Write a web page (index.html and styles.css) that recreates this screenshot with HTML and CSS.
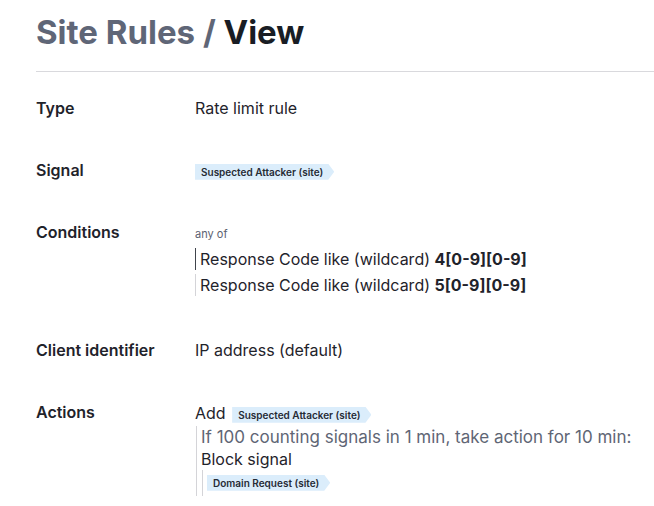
FILE: index.html
```html
<!DOCTYPE html>
<html lang="en">
<head>
    <meta charset="UTF-8">
    <meta name="viewport" content="width=device-width, initial-scale=1.0">
    <title>Site Rules / View</title>
    <link rel="stylesheet" href="styles.css">
</head>
<body>

    <div class="page">
        <h1 class="page-title"><span class="crumb">Site Rules /</span> View</h1>

        <dl class="details">
            <dt>Type</dt>
            <dd>Rate limit rule</dd>

            <dt>Signal</dt>
            <dd><span class="tag">Suspected Attacker (site)</span></dd>

            <dt>Conditions</dt>
            <dd>
                <div class="group-op">any of</div>
                <div class="cond cond-first">Response Code like (wildcard) <b>4[0-9][0-9]</b></div>
                <div class="cond cond-last">Response Code like (wildcard) <b>5[0-9][0-9]</b></div>
            </dd>

            <dt>Client identifier</dt>
            <dd>IP address (default)</dd>

            <dt>Actions</dt>
            <dd>
                <div class="action-line">Add <span class="tag">Suspected Attacker (site)</span></div>
                <div class="nested nested-outer">
                    <div class="muted">If 100 counting signals in 1 min, take action for 10 min:</div>
                    <div>Block signal</div>
                    <div class="nested nested-inner">
                        <span class="tag">Domain Request (site)</span>
                    </div>
                </div>
            </dd>
        </dl>
    </div>

</body>
</html>
```

FILE: styles.css
```css
body {
    margin: 0;
    font-family: Inter, "Noto Sans", sans-serif;
    color: #1f232b;
    background: #fff;
}

.page {
    padding: 0 0 0 36px;
}

.page-title {
    margin: 0;
    padding: 12px 0 19px;
    font-size: 33px;
    font-weight: 700;
    line-height: 40px;
    color: #191d24;
    border-bottom: 1px solid #d9d9dd;
}

.crumb {
    color: #5f6677;
}

.details {
    display: grid;
    grid-template-columns: 159px 1fr;
    row-gap: 40px;
    margin: 25px 0 0;
    font-size: 16px;
    line-height: 22px;
}

.details dt {
    font-weight: 600;
}

.details dd {
    margin: 0;
}

/* little arrow shaped label */
.tag {
    display: inline-block;
    height: 16px;
    padding: 0 11px 0 6px;
    font-size: 10px;
    font-weight: 600;
    line-height: 16px;
    color: #262b35;
    background: #dbedfb;
    vertical-align: middle;
    clip-path: polygon(0 0, calc(100% - 6px) 0, 100% 50%, calc(100% - 6px) 100%, 0 100%);
}

.group-op {
    font-size: 11px;
    line-height: 16px;
    padding-top: 5px;
    color: #5b6170;
}

.cond {
    margin-top: 4px;
    padding-left: 4px;
    border-left: 1px solid #d4d4d8;
    line-height: 22px;
}

.cond-first {
    margin-top: 6px;
    border-left-color: #40444c;
}

.cond-last {
    margin-bottom: 3px;
}

.cond b {
    font-weight: 700;
}

.action-line {
    padding-top: 1px;
    line-height: 22px;
}

.action-line .tag {
    margin-left: 2px;
}

.nested {
    margin-left: 1px;
    padding-left: 4px;
    border-left: 1px solid #d4d4d8;
}

.nested-outer {
    margin-top: 2px;
}

.nested-inner {
    padding: 0 0 4px 4px;
}

.muted {
    font-size: 17px;
    color: #5f6675;
}
```
